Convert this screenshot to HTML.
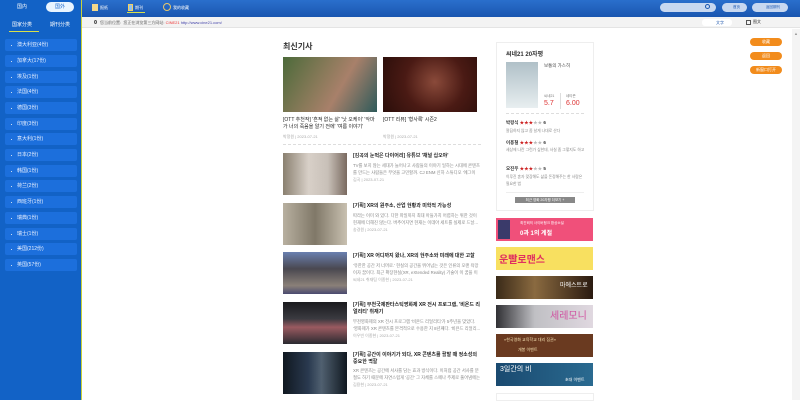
<!DOCTYPE html>
<html><head><meta charset="utf-8"><style>
*{margin:0;padding:0;box-sizing:border-box}
body{width:800px;height:400px;overflow:hidden;background:#fff;font-family:"Liberation Sans","Noto Sans CJK SC","Noto Sans CJK KR",sans-serif;position:relative;font-size:5px;color:#333}
.a{position:absolute}
#side{left:0;top:0;width:82px;height:400px;background:#1262c6;border-right:1px solid #c8d23a}
#top{left:82px;top:0;width:718px;height:17px;background:linear-gradient(#2a6fcc,#1a56b0)}
#bar{left:82px;top:17px;width:718px;height:11px;background:#f3f3f3;border-bottom:1px solid #e4e4e4}
.it{position:absolute;left:5px;width:72px;height:12px;background:#1c6fdc;border-radius:2px;color:#e8f0ff;font-size:5px;line-height:12px;padding-left:12px}
.it:before{content:"";position:absolute;left:6px;top:5.5px;width:1px;height:1px;background:#cde}
.w{color:#fff;font-size:5px}
.t{font-size:5px;color:#222;line-height:7px}
.m{font-size:4px;color:#aaa}
.d{font-size:4.3px;color:#888;line-height:6.5px;height:13px;overflow:hidden}
.ob{position:absolute;left:750px;width:32px;height:8px;border-radius:4px;background:#f28c1c;color:#fff;font-size:4px;text-align:center;line-height:8px}
.bt{position:absolute;color:#fff;font-size:4px}
</style></head><body>
<div id="side" class="a">
<div class="a w" style="left:17px;top:3px">国内</div>
<div class="a" style="left:46px;top:2px;width:28px;height:10px;border-radius:5px;background:#e9f5ff;color:#1a6ad0;font-size:5px;text-align:center;line-height:10px">国外</div>
<div class="a w" style="left:12px;top:21px">国家分类</div>
<div class="a w" style="left:50px;top:21px">期刊分类</div>
<div class="a" style="left:9px;top:31px;width:30px;height:1px;background:#d8e04a"></div>
<div class="it" style="top:39px">澳大利亚(4份)</div>
<div class="it" style="top:55px">加拿大(17份)</div>
<div class="it" style="top:71px">埃及(1份)</div>
<div class="it" style="top:86px">法国(4份)</div>
<div class="it" style="top:102px">德国(3份)</div>
<div class="it" style="top:118px">印度(3份)</div>
<div class="it" style="top:133px">意大利(1份)</div>
<div class="it" style="top:149px">日本(2份)</div>
<div class="it" style="top:165px">韩国(1份)</div>
<div class="it" style="top:180px">荷兰(2份)</div>
<div class="it" style="top:196px">西班牙(1份)</div>
<div class="it" style="top:212px">瑞典(1份)</div>
<div class="it" style="top:228px">瑞士(1份)</div>
<div class="it" style="top:243px">美国(212份)</div>
<div class="it" style="top:259px">英国(57份)</div>
</div>
<div id="top" class="a">
<div class="a" style="left:10px;top:4px;width:6px;height:7px;background:#f4d88a"></div>
<div class="a w" style="left:18px;top:5px;font-size:4px">报纸</div>
<div class="a" style="left:46px;top:4px;width:5px;height:7px;background:#8fc0f0;border:1px solid #f4d060"></div>
<div class="a w" style="left:53px;top:5px;font-size:4px">期刊</div>
<div class="a" style="left:45px;top:12px;width:18px;height:1px;background:#d8e04a"></div>
<div class="a" style="left:81px;top:3px;width:8px;height:8px;border-radius:50%;border:1px solid #e9c86a"></div>
<div class="a w" style="left:91px;top:5px;font-size:4px">我的收藏</div>
<div class="a" style="left:578px;top:3px;width:56px;height:9px;border-radius:5px;background:#c8d8f0"></div>
<div class="a" style="left:623px;top:4px;width:5px;height:5px;border-radius:50%;border:1px solid #1a56b0"></div>
<div class="a" style="left:640px;top:3px;width:25px;height:9px;border-radius:5px;background:#c8d8f0;color:#1a56b0;font-size:3.5px;line-height:9px;padding-left:11px">首页</div>
<div class="a" style="left:670px;top:3px;width:36px;height:9px;border-radius:5px;background:#c8d8f0;color:#1a56b0;font-size:3.5px;line-height:9px;padding-left:14px">返回期刊</div>
</div>
<div id="bar" class="a">
<div class="a" style="left:12px;top:3px;width:3px;height:4px;border-radius:50%;border:1px solid #555"></div>
<div class="a" style="left:18px;top:2.5px;font-size:4px;color:#666;white-space:nowrap">您当前位置: &nbsp;您正在浏览第三方网站: <span style="color:#e33">CINE21</span> <span style="color:#44a">http://www.cine21.com/</span></div>
<div class="a" style="left:620px;top:2px;width:30px;height:7px;background:#fff;border-radius:3px;font-size:4px;color:#2a5fb0;line-height:7px;padding-left:14px">文字</div>
<div class="a" style="left:664px;top:2.5px;width:5px;height:5px;border:1px solid #555"></div>
<div class="a" style="left:671px;top:2px;font-size:4px;color:#333">图文</div>
</div>
<div class="a" style="left:792px;top:29px;width:8px;height:371px;background:#f4f4f4"></div>
<div class="a" style="left:794px;top:31px;font-size:4px;color:#999">▲</div>
<div class="ob" style="top:38px">收藏</div>
<div class="ob" style="top:52px">返回</div>
<div class="ob" style="top:66px">新窗口打开</div>

<div class="a" style="left:283px;top:41px;font-size:8px;font-weight:bold;color:#333">최신기사</div>
<div class="a" style="left:283px;top:57px;width:94px;height:55px;background:linear-gradient(120deg,#4c6a3a,#8a7a5a 40%,#a8806a 60%,#2e5a5a)"></div>
<div class="a" style="left:383px;top:57px;width:94px;height:55px;background:radial-gradient(circle at 55% 45%,#8a4a3a,#4a1a14 50%,#2a0e0a)"></div>
<div class="a t" style="left:283px;top:117px;width:95px">[OTT 추천작] '흔적 없는 삶' '낫 오케이' '악마가 너의 죽음을 알기 전에' '여름 이야기'</div>
<div class="a t" style="left:383px;top:117px">[OTT 리뷰] '형사록' 시즌2</div>
<div class="a m" style="left:283px;top:134px">박정원 | 2023-07-21</div>
<div class="a m" style="left:383px;top:134px">박정원 | 2023-07-21</div>
<div class="a" style="left:283px;top:144px;width:198px;border-top:1px dashed #ddd"></div>

<div class="a" style="left:283px;top:153px;width:64px;height:42px;background:linear-gradient(90deg,#8a8070,#d8d0c8 40%,#c8c0b8 70%,#7a6a60)"></div>
<div class="a t" style="left:353px;top:153px;font-weight:bold">[김곡의 눈먹은 다이어리] 유튜브 '채널 십오야'</div>
<div class="a d" style="left:353px;top:163px;width:128px">TV를 보지 않는 세대가 늘어나고 사람들의 이야기 일하는 시대에 콘텐츠를 만드는 사람들은 무엇을 고민할까. CJ ENM 신하 스튜디오 '에그이즈...</div>
<div class="a m" style="left:353px;top:177px">김곡 | 2023-07-21</div>

<div class="a" style="left:283px;top:203px;width:64px;height:42px;background:linear-gradient(90deg,#b8b0a0,#807868 50%,#c8c0b0)"></div>
<div class="a t" style="left:353px;top:203px;font-weight:bold">[기획] XR의 원주소, 산업 현황과 미학적 가능성</div>
<div class="a d" style="left:353px;top:213px;width:128px">따라는 이미 와 있다. 다한 파일까지 최대 아들가치 어렵하는 위한 것이 현재에 더해진 않는다. 버추어지면 현재는 이데아 세트를 실제로 드날...</div>
<div class="a m" style="left:353px;top:227px">송경원 | 2023-07-21</div>

<div class="a" style="left:283px;top:252px;width:64px;height:42px;background:linear-gradient(#6a80b0,#4a4850 40%,#8a8078 80%,#4a4a70)"></div>
<div class="a t" style="left:353px;top:253px;font-weight:bold">[기획] XR 어디까지 왔나, XR의 현주소와 미래에 대한 고찰</div>
<div class="a d" style="left:353px;top:263px;width:128px">'유한한 공간 저 너머로.' 현실의 공간을 뛰어넘는 것은 인류의 오랜 욕망이자 꿈이다. 최근 확장현실(XR, eXtended Reality) 기술이 이 꿈을 이제...</div>
<div class="a m" style="left:353px;top:277px">씨네21 취재팀 이종현 | 2023-07-21</div>

<div class="a" style="left:283px;top:302px;width:64px;height:42px;background:linear-gradient(#1a1a1e,#3a3a40 40%,#9a5a60 60%,#2a2a30)"></div>
<div class="a t" style="left:353px;top:302px;width:128px;font-weight:bold">[기획] 부천국제판타스틱영화제 XR 전시 프로그램, '비욘드 리얼리티' 취재기</div>
<div class="a d" style="left:353px;top:319px;width:128px">부천영화제의 XR 전시 프로그램 '비욘드 리얼리티'가 5주년을 맞았다. '영화제가 XR 콘텐츠를 본격적으로 수용한 지 8년째다. '비욘드 리얼리...</div>
<div class="a m" style="left:353px;top:333px">이우빈 이종현 | 2023-07-21</div>

<div class="a" style="left:283px;top:352px;width:64px;height:42px;background:linear-gradient(90deg,#101820,#2a3a50 40%,#506070 60%,#101820)"></div>
<div class="a t" style="left:353px;top:352px;width:128px;font-weight:bold">[기획] 공간이 이야기가 되다, XR 콘텐츠를 활발 때 정소성의 중요한 역할</div>
<div class="a d" style="left:353px;top:368px;width:128px">XR 콘텐츠는 공간에 서사를 담는 효과 방식이다. 이처럼 공간 서사를 분절도 하기 때문에 자연스럽게 '공간' 그 자체를 스페나 주제로 풀어냄에는 ...</div>
<div class="a m" style="left:353px;top:382px">김용현 | 2023-07-21</div>

<div class="a" style="left:496px;top:42px;width:98px;height:169px;border:1px solid #eee"></div>
<div class="a" style="left:506px;top:49px;font-size:6px;font-weight:bold;color:#333">씨네21 20자평</div>
<div class="a" style="left:506px;top:62px;width:32px;height:46px;background:linear-gradient(#b0c0c8,#e8eef0)"></div>
<div class="a" style="left:544px;top:63px;font-size:4.5px;color:#444">보통의 가스히</div>
<div class="a" style="left:544px;top:94px;font-size:3.5px;color:#777">씨네21</div>
<div class="a" style="left:544px;top:100px;font-size:7px;color:#d33">5.7</div>
<div class="a" style="left:560px;top:93px;width:1px;height:16px;background:#ddd"></div>
<div class="a" style="left:566px;top:94px;font-size:3.5px;color:#777">네티즌</div>
<div class="a" style="left:566px;top:100px;font-size:7px;color:#d33">6.00</div>
<div class="a" style="left:506px;top:113px;width:78px;border-top:1px dashed #ddd"></div>
<div class="a" style="left:506px;top:120px;font-size:4.5px;color:#333;font-weight:bold">박평식 <span style="color:#c22">★★★</span><span style="color:#bbb">★★</span> 6</div>
<div class="a d" style="left:506px;top:128px;width:80px;font-size:3.8px">깔끔하지 않고 좀 날게 나대로 산다</div>
<div class="a" style="left:506px;top:140px;font-size:4.5px;color:#333;font-weight:bold">이용철 <span style="color:#c22">★★★</span><span style="color:#bbb">★★</span> 6</div>
<div class="a d" style="left:506px;top:147px;width:80px;font-size:3.8px">세상에 나란 그런가 싶한데, 사실 좀 그렇지도 하고</div>
<div class="a" style="left:506px;top:166px;font-size:4.5px;color:#333;font-weight:bold">오진우 <span style="color:#c22">★★★</span><span style="color:#bbb">★★</span> 5</div>
<div class="a d" style="left:506px;top:174px;width:80px;font-size:3.8px">이루진 혼자 맞장해도 삶을 돈정해주는 한 사람은 필요한 법</div>
<div class="a" style="left:506px;top:192px;width:78px;border-top:1px solid #eee"></div>
<div class="a" style="left:515px;top:197px;width:60px;height:6px;background:#888;color:#fff;font-size:3.5px;text-align:center;line-height:6px">최근 영화 20자평 더보기 +</div>

<div class="a" style="left:496px;top:218px;width:97px;height:23px;background:#f0507a;color:#fff;font-weight:bold;font-size:6px;padding:10px 0 0 24px">0과 1의 계절</div>
<div class="bt" style="left:520px;top:221px;font-size:3.5px">최진혁의 사이버펑크 환상소설</div>
<div class="a" style="left:498px;top:220px;width:12px;height:19px;background:#3a3a6a"></div>
<div class="a" style="left:496px;top:247px;width:97px;height:23px;background:#f8e060;color:#e03060;font-weight:bold;font-size:10px;padding:4px 0 0 3px">운빨로맨스</div>
<div class="a" style="left:496px;top:276px;width:97px;height:23px;background:linear-gradient(90deg,#3a2a18,#8a6a40 40%,#2a1a10)"></div>
<div class="bt" style="left:560px;top:280px;font-size:6px">마에스트로</div>
<div class="a" style="left:496px;top:305px;width:97px;height:23px;background:linear-gradient(90deg,#303034,#c0c0c4 40%,#e0d8e0)"></div>
<div class="bt" style="left:550px;top:307px;font-size:10px;color:#d050a0">세레모니</div>
<div class="a" style="left:496px;top:334px;width:97px;height:23px;background:#6a3a20"></div>
<div class="bt" style="left:504px;top:337px;color:#f4e0b0">«한국영화 교육학교 대리 집권»</div>
<div class="bt" style="left:518px;top:347px;color:#f4e0b0">개봉 이벤트</div>
<div class="a" style="left:496px;top:363px;width:97px;height:23px;background:linear-gradient(90deg,#1a4a70,#2a6a90)"></div>
<div class="bt" style="left:500px;top:364px;font-size:7px">3일간의 비</div>
<div class="bt" style="left:565px;top:377px">초대 이벤트</div>
<div class="a" style="left:496px;top:393px;width:98px;height:8px;border:1px solid #eee"></div>
</body></html>
